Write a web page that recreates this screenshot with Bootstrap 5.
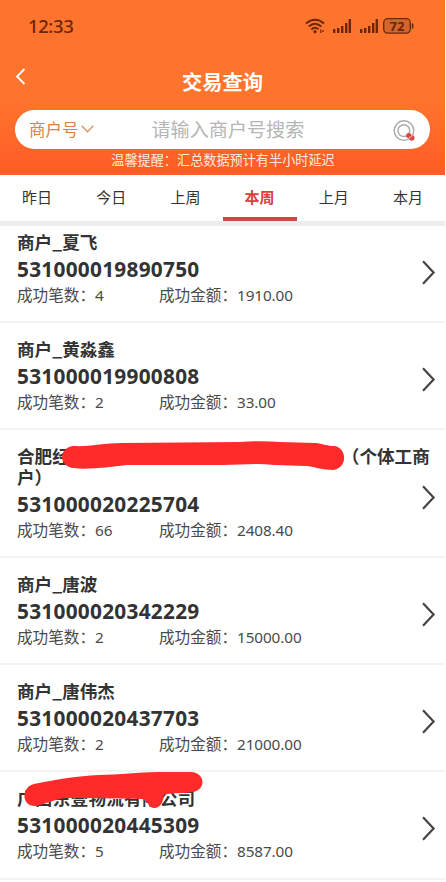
<!DOCTYPE html>
<html lang="zh-CN">
<head>
<meta charset="utf-8">
<meta name="viewport" content="width=device-width, initial-scale=1">
<title>交易查询</title>
<link href="https://cdn.jsdelivr.net/npm/bootstrap@5.3.0/dist/css/bootstrap.min.css" rel="stylesheet">
<style>
body{font-family:"Noto Sans","Noto Sans CJK SC",sans-serif;color:#333;background:#fff;width:445px;height:882px;overflow:hidden}
.cjk,.shop-name,.stat-label{font-family:"Noto Sans CJK SC",sans-serif}
.top-area{height:175px;background:linear-gradient(#ff742d 0,#ff742d 100px,#ff5b26 175px)}
.status-bar{height:52px;padding:0 31px 0 28px;color:#6b2508}
.clock{font:500 18.5px/1 "Noto Sans",sans-serif;letter-spacing:-.4px}
.signal{margin-left:9px}
.battery{margin-left:5px}
.title-bar{height:58px;padding:0 15px}
.title-bar h1{font-size:20.3px;line-height:24px}
.back{margin-top:-10px}
.back-space{width:11px}
.search-pill{height:39px;margin:0 15px;padding:0 15px 1px 14px}
.kind{font-size:16.5px;line-height:24px;color:#e0813f}
.caret{margin-left:2px}
.hint{font-size:19.1px;line-height:28px;color:#b5b5b5;margin-left:58px}
.tip{font-size:13.15px;line-height:22px;color:#ffeadd;padding-left:1px}
.period{height:46px}
.period .nav-link{width:74.2px;height:46px;padding:0;font-size:15px;line-height:44px;color:#333;text-align:center;border-radius:0}
.period .nav-link.active{color:#d9403f;font-weight:700;border-bottom:4px solid #d34644}
.divider{height:5px;background:#ededed}
.results .list-group-item{padding:15px 9px 0 17px;height:107.15px;border:0;color:#333}
.results.list-group-flush>.list-group-item,.results.list-group-flush>.list-group-item:last-child{border-bottom:2px solid #f3f3f3}
.results .list-group-item:first-child{height:97px;padding-top:5px}
.results .list-group-item.tall{height:128px}
.shop-name{font-size:17.6px;line-height:21px;font-weight:700}
.shop-name.long{letter-spacing:.25px}
.shop-no{font-size:20.8px;line-height:26px;font-weight:700;letter-spacing:.27px;margin-top:4px}
.stats{height:24px;font-size:15.3px;line-height:24px;color:#4a4a4a;letter-spacing:-.1px}
.stat-label{font-size:15.6px;letter-spacing:0}
.stat-count{width:142px}
.masked{display:inline-block;width:272px}
.arrow{margin-top:29px}
.tall .arrow{margin-top:-2px}
.scribble{position:absolute;left:0;top:0;pointer-events:none}
</style>
</head>
<body>
<header class="top-area">
  <div class="status-bar d-flex align-items-center justify-content-between">
    <span class="clock">12:33</span>
    <div class="d-flex align-items-center">
      <svg width="20" height="16" viewBox="0 0 20 16" fill="none" stroke="#6b2508" stroke-width="2"><path d="M1 5.5Q10-2 19 5.5M3.7 8.6Q10 3 16.3 8.6M6.4 11.4Q10 8 13.5 11.4"/><circle cx="10" cy="13.8" r="1.2" fill="#6b2508" stroke-width="1"/><path d="M15.8 11.5v3.5M18 12v2" stroke-width="1.2"/></svg>
      <svg class="ms-2" width="18" height="14" viewBox="0 0 18 14" fill="#6b2508"><path d="M0 10h2.4v4H0zM4 9h2.4v5H4zM8 7h2.4v7H8zM12 4h2.4v10H12zM15.6 0H18v14h-2.4z"/></svg>
      <svg class="signal" width="18" height="14" viewBox="0 0 18 14" fill="#6b2508"><path d="M0 10h2.4v4H0zM4 9h2.4v5H4zM8 7h2.4v7H8zM12 4h2.4v10H12zM15.6 0H18v14h-2.4z"/></svg>
      <svg class="battery" width="31" height="16" viewBox="0 0 31 16"><rect x=".7" y=".7" width="26.6" height="14.4" rx="4" fill="#d2662d" stroke="#6b2508" stroke-width="1.3"/><path d="M29.6 5.5v5" stroke="#6b2508" stroke-width="1.6"/><text x="14" y="12.5" text-anchor="middle" font-family="Noto Sans,sans-serif" font-size="13" font-weight="700" fill="#6b2508">72</text></svg>
    </div>
  </div>
  <div class="title-bar d-flex align-items-center">
    <svg class="back" width="11" height="17" viewBox="0 0 11 17" fill="none" stroke="#fff" stroke-width="1.8"><path d="M9.5 1 2 8.5 9.5 16"/></svg>
    <h1 class="cjk fw-bold text-white text-center flex-grow-1 mb-0">交易查询</h1>
    <span class="back-space"></span>
  </div>
  <div class="search-pill cjk rounded-pill bg-white d-flex align-items-center">
    <span class="kind">商户号</span>
    <svg class="caret" width="13" height="8" viewBox="0 0 13 8" fill="none" stroke="#d99161" stroke-width="1.3"><path d="m.7.8 5.8 6 5.8-6"/></svg>
    <span class="hint">请输入商户号搜索</span>
    <svg class="ms-auto mt-1" width="22" height="23" viewBox="0 0 22 23" fill="none" stroke="#aaa"><circle cx="11" cy="10.6" r="9.8" stroke-width="1.4"/><circle cx="10.8" cy="10.6" r="5.9" stroke-width="1.4"/><circle cx="15.8" cy="15.6" r="2.7" fill="#df4744" stroke="none"/><circle cx="18.8" cy="18" r="2.7" fill="#df4744" stroke="none"/><path d="m15.6 18.6 4-3.4" stroke="#fff" stroke-width=".7"/></svg>
  </div>
  <div class="tip cjk text-center">温馨提醒：汇总数据预计有半小时延迟</div>
</header>
<nav class="nav period cjk flex-nowrap">
  <a class="nav-link" href="#">昨日</a><a class="nav-link" href="#">今日</a><a class="nav-link" href="#">上周</a><a class="nav-link active" href="#">本周</a><a class="nav-link" href="#">上月</a><a class="nav-link" href="#">本月</a>
</nav>
<div class="divider"></div>
<main class="list-group list-group-flush results">
  <div class="list-group-item first">
    <div class="d-flex justify-content-between"><div><div class="shop-name">商户_夏飞</div><div class="shop-no">531000019890750</div>
    <div class="stats d-flex"><div class="stat-count"><span class="stat-label">成功笔数：</span>4</div><div><span class="stat-label">成功金额：</span>1910.00</div></div></div>
    <svg class="arrow" width="15" height="25" viewBox="0 0 15 25" fill="none" stroke="#444" stroke-width="2.2"><path d="m2 1.2 10.6 11.3L2 23.8"/></svg></div>
  </div>
  <div class="list-group-item">
    <div class="d-flex justify-content-between"><div><div class="shop-name">商户_黄淼鑫</div><div class="shop-no">531000019900808</div>
    <div class="stats d-flex"><div class="stat-count"><span class="stat-label">成功笔数：</span>2</div><div><span class="stat-label">成功金额：</span>33.00</div></div></div>
    <svg class="arrow" width="15" height="25" viewBox="0 0 15 25" fill="none" stroke="#444" stroke-width="2.2"><path d="m2 1.2 10.6 11.3L2 23.8"/></svg></div>
  </div>
  <div class="list-group-item tall">
    <div class="shop-name">合肥经<span class="masked"></span>（个体工商户）</div>
    <div class="d-flex justify-content-between"><div><div class="shop-no">531000020225704</div>
    <div class="stats d-flex"><div class="stat-count"><span class="stat-label">成功笔数：</span>66</div><div><span class="stat-label">成功金额：</span>2408.40</div></div></div>
    <svg class="arrow" width="15" height="25" viewBox="0 0 15 25" fill="none" stroke="#444" stroke-width="2.2"><path d="m2 1.2 10.6 11.3L2 23.8"/></svg></div>
    <svg class="scribble" width="445" height="50" viewBox="0 0 445 50"><path fill="#ff2a2a" d="M73 16C89 17 103 13 122 13L240 12C254 11 267 11 280 12L316 13C325 14 326 16 335 16C348 19 347 39 333 40C322 40 316 37 307 36L274 35C257 33 240 35 223 35L127 35C109 37 88 40 73 38C58 35 59 18 73 16Z"/></svg>
  </div>
  <div class="list-group-item">
    <div class="d-flex justify-content-between"><div><div class="shop-name">商户_唐波</div><div class="shop-no">531000020342229</div>
    <div class="stats d-flex"><div class="stat-count"><span class="stat-label">成功笔数：</span>2</div><div><span class="stat-label">成功金额：</span>15000.00</div></div></div>
    <svg class="arrow" width="15" height="25" viewBox="0 0 15 25" fill="none" stroke="#444" stroke-width="2.2"><path d="m2 1.2 10.6 11.3L2 23.8"/></svg></div>
  </div>
  <div class="list-group-item">
    <div class="d-flex justify-content-between"><div><div class="shop-name">商户_唐伟杰</div><div class="shop-no">531000020437703</div>
    <div class="stats d-flex"><div class="stat-count"><span class="stat-label">成功笔数：</span>2</div><div><span class="stat-label">成功金额：</span>21000.00</div></div></div>
    <svg class="arrow" width="15" height="25" viewBox="0 0 15 25" fill="none" stroke="#444" stroke-width="2.2"><path d="m2 1.2 10.6 11.3L2 23.8"/></svg></div>
  </div>
  <div class="list-group-item">
    <div class="d-flex justify-content-between"><div><div class="shop-name long">广西东壹物流有限公司</div><div class="shop-no">531000020445309</div>
    <div class="stats d-flex"><div class="stat-count"><span class="stat-label">成功笔数：</span>5</div><div><span class="stat-label">成功金额：</span>8587.00</div></div></div>
    <svg class="arrow" width="15" height="25" viewBox="0 0 15 25" fill="none" stroke="#444" stroke-width="2.2"><path d="m2 1.2 10.6 11.3L2 23.8"/></svg></div>
    <svg class="scribble" width="240" height="50" viewBox="0 0 240 50"><path fill="#ff2a2a" d="M34 12C58 7 78 4 98 3C120 3 138 0 158 0L191 0C206 1 206 18 193 20C183 22 173 20 164 23C163 30 161 35 155 36C147 36 149 28 142 27C116 26 91 26 66 26C54 27 47 32 36 34C21 35 21 15 34 12Z"/></svg>
  </div>
</main>
<script src="https://cdn.jsdelivr.net/npm/bootstrap@5.3.0/dist/js/bootstrap.bundle.min.js"></script>
</body>
</html>
